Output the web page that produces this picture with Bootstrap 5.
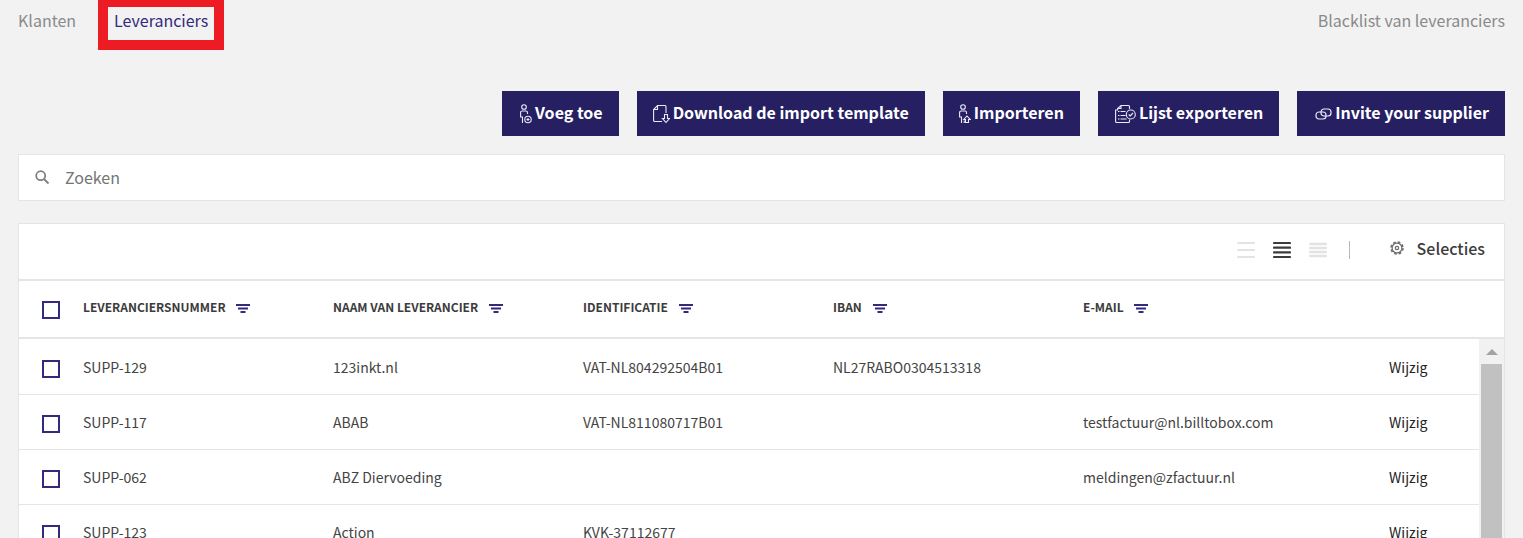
<!DOCTYPE html>
<html lang="nl">
<head>
<meta charset="utf-8">
<meta name="viewport" content="width=device-width, initial-scale=1">
<title>Leveranciers</title>
<link rel="stylesheet" href="https://cdn.jsdelivr.net/npm/bootstrap@5.3.0/dist/css/bootstrap.min.css">
<style>
  body { background: #f2f2f2; color: #3c3c3c; font-family: "Noto Sans CJK SC", "Open Sans", sans-serif; font-size: 14px; line-height: 20px; }
  .page { padding: 0 18px; }
  .top-tabs { height: 50px; font-size: 16px; }
  .top-tabs a { color: #8a8a8a; text-decoration: none; line-height: 24px; padding-top: 8px; }
  .top-tabs a.current { color: #322a7d; border: 10px solid #ed1c24; border-top-width: 7px; padding: 1px 6px 0; margin-left: 22px; }
  .actions { gap: 18px; padding: 41px 0 18px; }
  .btn-brand { --bs-btn-color: #fff; --bs-btn-bg: #262063; --bs-btn-hover-color: #fff; --bs-btn-hover-bg: #322a7d; --bs-btn-border-width: 0; --bs-btn-border-radius: 0; --bs-btn-font-size: 16px; --bs-btn-font-weight: 700; height: 45px; padding: 0 16px 3px; gap: 3px; line-height: 24px; white-space: nowrap; }
  .btn-brand svg { margin-top: 3px; }
  .panel { background: #fff; border: 1px solid #e5e5e5; }
  .search { height: 47px; padding: 0 16px; gap: 15px; margin-bottom: 22px; }
  .search input { font-size: 16px; background: none; margin-bottom: 2px; }
  .search input::placeholder { color: #757575; opacity: 1; }
  .toolbar { height: 55px; padding: 0 19px 3px 0; gap: 18px; }
  .toolbar button { border: 0; padding: 0; background: none; line-height: 0; }
  .toolbar .choose { font-size: 16px; font-weight: 500; line-height: 24px; color: #3c3c3c; gap: 13px; padding-bottom: 4px; }
  .divider { width: 1px; height: 18px; background: #b8b8b8; margin: 0 22px 0 4px; }
  .suppliers { table-layout: fixed; border-collapse: separate; border-spacing: 0; width: 100%; }
  .suppliers th, .suppliers td { height: 55px; padding: 0; border-bottom: 1px solid #e5e5e5; vertical-align: middle; white-space: nowrap; color: #444; }
  .suppliers tbody tr:first-child td { height: 56px; }
  .suppliers thead th { height: 60px; padding: 0 0 4px; border-top: 2px solid #e5e5e5; border-bottom-width: 2px; font-size: 12px; font-weight: 700; color: #3c3c3c; }
  .suppliers .tick { width: 64px; padding: 4px 0 0 23px; }
  .suppliers thead .tick { padding: 2px 0 0 23px; }
  .suppliers .field { width: 250px; }
  .suppliers .edit { width: 115px; }
  .suppliers .edit a { color: #222; text-decoration: none; }
  .suppliers th button { border: 0; padding: 0; margin-left: 8px; background: none; line-height: 0; }
  .tick input { appearance: none; display: block; width: 18px; height: 18px; border: 2px solid #322a7d; background: #fff; margin: 0; }
  .tick input:checked { background: #322a7d; }
  .scroller { position: absolute; top: 60px; right: 0; bottom: 0; width: 25px; background: #f1f1f1; padding: 10px 2px 0; }
  .scroller .thumb { background: #c1c1c1; margin-top: 9px; }
</style>
<script src="https://cdn.jsdelivr.net/npm/bootstrap@5.3.0/dist/js/bootstrap.bundle.min.js"></script>
</head>
<body>
<div class="page vh-100 overflow-hidden d-flex flex-column">
  <nav class="top-tabs d-flex flex-shrink-0">
    <a href="#">Klanten</a>
    <a href="#" class="current" aria-current="page">Leveranciers</a>
    <a href="#" class="ms-auto">Blacklist van leveranciers</a>
  </nav>

  <div class="actions d-flex justify-content-end">
    <button type="button" class="btn btn-brand d-flex align-items-center">
      <svg width="14" height="20" viewBox="-2 0 14 20" fill="none" stroke="#eceaf8" stroke-width="1.100"><circle cx="4" cy="3" r="2.300"/><path d="M7.500 10V8.500Q7.500 7 6 7H2.200Q.6 7 .6 8.500V13H2.500V19"/><circle cx="8" cy="15.500" r="3.200"/><path d="M8 14v3M6.500 15.500h3"/></svg>
      Voeg toe</button>
    <button type="button" class="btn btn-brand d-flex align-items-center">
      <svg width="17" height="20" viewBox="0 0 17 20" fill="none" stroke="#eceaf8" stroke-width="1.100"><path d="M13 9V2.500Q13 1.500 12 1.500H4.500L.6 5.500V16.500Q.6 17.500 1.600 17.500H9M4.500 1.500V5.500H.6"/><path d="M11.500 10.500h3v4h2L13 18.500 9.500 14.500h2z"/></svg>
      Download de import template</button>
    <button type="button" class="btn btn-brand d-flex align-items-center">
      <svg width="12" height="20" viewBox="0 0 12 20" fill="none" stroke="#eceaf8" stroke-width="1.100"><circle cx="4" cy="3" r="2.300"/><path d="M7.500 10V8.500Q7.500 7 6 7H2.200Q.6 7 .6 8.500V13H2.500V19M5.200 19V16.500"/><path d="M8 12l3.200 3.500H9.500V18.500H6.500V15.500H4.800z"/></svg>
      Importeren</button>
    <button type="button" class="btn btn-brand d-flex align-items-center">
      <svg width="22" height="20" viewBox="-1 0 22 20" fill="none" stroke="#eceaf8" stroke-width="1.100"><path d="M14.500 5V2.500Q14.500 1.500 13.500 1.500H6L2.600 4.500V6H.6V17.500Q.6 18.500 1.600 18.500H13.500Q14.500 18.500 14.500 17.500V15.500M6 1.500V4.500H2.600M5.500 7.500h5M5.500 11.500h5M5.500 15h6M3 7.500h1.500M3 11.500h1.500M3 15h1.500"/><circle cx="15.800" cy="10.500" r="4.500"/><path d="M13.700 10.500l1.500 1.500 2.800-3"/></svg>
      Lijst exporteren</button>
    <button type="button" class="btn btn-brand d-flex align-items-center">
      <svg width="19" height="12" viewBox="0 0 19 12" fill="none" stroke="#eceaf8" stroke-width="1.200"><rect x="8" y="1" width="10" height="7" rx="3"/><rect x="3" y="4" width="10" height="7" rx="3"/></svg>
      Invite your supplier</button>
  </div>

  <div class="panel search d-flex align-items-center flex-shrink-0">
    <svg width="15" height="15" viewBox="0 0 15 15" fill="none" stroke="#808080" stroke-width="1.800"><circle cx="5.700" cy="5.700" r="4.500"/><path d="M9 9L13.500 13.500"/></svg>
    <input type="text" class="border-0 p-0 flex-fill" placeholder="Zoeken" aria-label="Zoeken">
  </div>

  <main class="panel border-bottom-0 flex-fill overflow-hidden">
    <div class="toolbar d-flex align-items-center justify-content-end">
      <button type="button" aria-label="Ruime rijen"><svg width="18" height="18" viewBox="0 0 18 18" stroke="#e3e3e3" stroke-width="2" stroke-linecap="round"><path d="M1 2h16M1 9h16M1 16h16"/></svg></button>
      <button type="button" aria-label="Normale rijen"><svg width="18" height="18" viewBox="0 0 18 18" stroke="#3c3c3c" stroke-width="2.200" stroke-linecap="round"><path d="M1 2h16M1 6.600h16M1 11.400h16M1 16h16"/></svg></button>
      <button type="button" aria-label="Compacte rijen"><svg width="18" height="18" viewBox="0 0 18 18" stroke="#e3e3e3" stroke-width="2.400" stroke-linecap="round"><path d="M1 3h16M1 7h16M1 11h16M1 15h16"/></svg></button>
      <span class="divider"></span>
      <button type="button" class="choose d-flex align-items-center">
        <svg width="14" height="14" viewBox="0 0 14 14" fill="none" stroke="#6b6b6b"><circle cx="7" cy="7" r="4.900" stroke-width="1.200"/><circle cx="7" cy="7" r="6" stroke-width="1.500" stroke-dasharray="2.700 2.012"/><circle cx="7" cy="7" r="1.700" stroke-width="1.200"/></svg>
        Selecties</button>
    </div>

    <div class="position-relative">
      <table class="suppliers">
        <thead>
          <tr>
            <th class="tick"><input type="checkbox" aria-label="Alles selecteren"></th>
            <th class="field">LEVERANCIERSNUMMER <button type="button" aria-label="Filter"><svg width="14" height="9" viewBox="0 0 14 9" stroke="#322a7d" stroke-width="1.800"><path d="M0 1h14M2 4.500h10M4.500 8h5"/></svg></button></th>
            <th class="field">NAAM VAN LEVERANCIER <button type="button" aria-label="Filter"><svg width="14" height="9" viewBox="0 0 14 9" stroke="#322a7d" stroke-width="1.800"><path d="M0 1h14M2 4.500h10M4.500 8h5"/></svg></button></th>
            <th class="field">IDENTIFICATIE <button type="button" aria-label="Filter"><svg width="14" height="9" viewBox="0 0 14 9" stroke="#322a7d" stroke-width="1.800"><path d="M0 1h14M2 4.500h10M4.500 8h5"/></svg></button></th>
            <th class="field">IBAN <button type="button" aria-label="Filter"><svg width="14" height="9" viewBox="0 0 14 9" stroke="#322a7d" stroke-width="1.800"><path d="M0 1h14M2 4.500h10M4.500 8h5"/></svg></button></th>
            <th>E-MAIL <button type="button" aria-label="Filter"><svg width="14" height="9" viewBox="0 0 14 9" stroke="#322a7d" stroke-width="1.800"><path d="M0 1h14M2 4.500h10M4.500 8h5"/></svg></button></th>
            <th class="edit"></th>
          </tr>
        </thead>
        <tbody>
          <tr><td class="tick"><input type="checkbox" aria-label="SUPP-129"></td><td>SUPP-129</td><td>123inkt.nl</td><td>VAT-NL804292504B01</td><td>NL27RABO0304513318</td><td></td><td class="edit"><a href="#">Wijzig</a></td></tr>
          <tr><td class="tick"><input type="checkbox" aria-label="SUPP-117"></td><td>SUPP-117</td><td>ABAB</td><td>VAT-NL811080717B01</td><td></td><td>testfactuur@nl.billtobox.com</td><td class="edit"><a href="#">Wijzig</a></td></tr>
          <tr><td class="tick"><input type="checkbox" aria-label="SUPP-062"></td><td>SUPP-062</td><td>ABZ Diervoeding</td><td></td><td></td><td>meldingen@zfactuur.nl</td><td class="edit"><a href="#">Wijzig</a></td></tr>
          <tr><td class="tick"><input type="checkbox" aria-label="SUPP-123"></td><td>SUPP-123</td><td>Action</td><td>KVK-37112677</td><td></td><td></td><td class="edit"><a href="#">Wijzig</a></td></tr>
        </tbody>
      </table>
      <div class="scroller d-flex flex-column" aria-hidden="true">
        <svg class="mx-auto flex-shrink-0" width="12" height="6" viewBox="0 0 12 6" fill="#a3a3a3"><path d="M6 0l6 6H0z"/></svg>
        <div class="thumb flex-fill"></div>
      </div>
    </div>
  </main>
</div>
</body>
</html>
